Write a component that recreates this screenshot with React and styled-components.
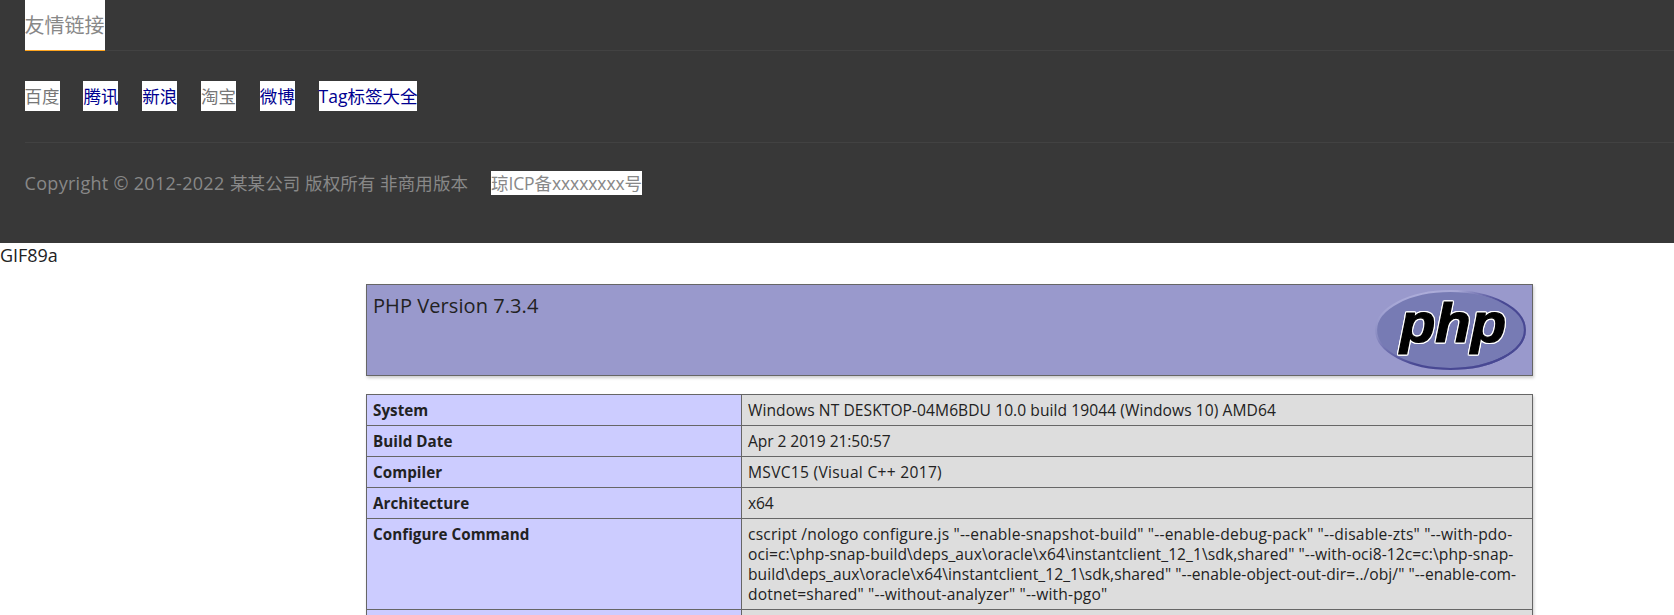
import React from "react";
import styled, { createGlobalStyle } from "styled-components";

const GlobalStyle = createGlobalStyle`
  * { box-sizing: border-box; }
  html, body { margin: 0; }
  body {
    background: #fff;
    color: #222;
    font-family: "Open Sans", "Noto Sans CJK SC", sans-serif;
  }
`;

const Page = styled.div`
  height: 615px;
  overflow: hidden;
`;

const Footer = styled.footer`
  height: 243px;
  padding-left: 24.6px;
  background: #383838;
  color: #888;
`;

const FooterHeading = styled.div`
  display: flex;
  height: 51px;
  border-bottom: 1px solid #424242;
`;

const HeadingLabel = styled.span`
  width: 80px;
  height: 51px;
  background: #fff;
  border-bottom: 1px solid #ffa51f;
  font-size: 20px;
  line-height: 51px;
  white-space: nowrap;
`;

const LinkRow = styled.nav`
  display: flex;
  gap: 23.8px;
  height: 92px;
  padding-top: 30px;
  border-bottom: 1px solid #424242;
`;

const FriendLink = styled.a`
  height: 30px;
  background: #fff;
  color: ${(p) => (p.$plain ? "#777" : "#000090")};
  font-size: 17.5px;
  line-height: 31px;
  white-space: nowrap;
`;

const Copyright = styled.div`
  display: flex;
  align-items: flex-start;
  padding-top: 28px;
  font-size: 17.5px;
  line-height: 25px;
  white-space: pre;
`;

const CopyrightYears = styled.span`
  width: 205.4px;
  font-size: 18px;
  letter-spacing: 0.29px;
`;

const CopyrightOwner = styled.span`
  width: 238px;
  letter-spacing: 0.1px;
`;

const IcpLink = styled.a`
  width: 151px;
  height: 24px;
  margin-left: 23px;
  background: #fff;
  letter-spacing: -0.09px;
`;

const Signature = styled.div`
  height: 41px;
  font-size: 18px;
  line-height: 25px;
  letter-spacing: -0.05px;
`;

const InfoColumn = styled.main`
  width: 1167px;
  margin-left: 366px;
`;

const VersionBox = styled.header`
  display: flex;
  justify-content: space-between;
  height: 92px;
  margin-bottom: 18px;
  padding: 5px 6px;
  background: #9999cc;
  border: 1px solid #666;
  box-shadow: 1px 2px 3px #ccc;
`;

const VersionTitle = styled.h1`
  margin: 0;
  font-size: 20px;
  font-weight: 400;
  line-height: 32px;
  letter-spacing: 0.07px;
`;

const Logo = styled.svg`
  display: block;
  width: 151px;
  height: 80px;
`;

const LogoText = styled.text`
  font-family: "Liberation Sans", sans-serif;
  font-size: 55px;
  font-weight: 700;
  font-style: italic;
  fill: #000;
  stroke: #000;
  stroke-width: 1.2px;
  filter: drop-shadow(1px 0 0.4px #fff) drop-shadow(-1px 0 0.4px #fff)
    drop-shadow(0 1px 0.4px #fff) drop-shadow(0 -1px 0.4px #fff);
`;

const InfoTable = styled.section`
  border: 1px solid #666;
  box-shadow: 1px 2px 3px #ccc;
`;

const InfoRow = styled.div`
  display: grid;
  grid-template-columns: 375px 1fr;
  min-height: 31px;
  border-bottom: 1px solid #666;
  line-height: 20px;
`;

const Name = styled.div`
  padding: 5px 6px;
  background: #ccccff;
  border-right: 1px solid #666;
  font-size: 15.2px;
  font-weight: 700;
  letter-spacing: 0.05px;
`;

const Value = styled.div`
  padding: 5px 6px;
  background: #ddd;
  font-size: 15.6px;
`;

const Line = styled.div`
  white-space: nowrap;
  letter-spacing: ${(p) => p.$track}px;
`;

const links = [
  { label: "百度", plain: true },
  { label: "腾讯" },
  { label: "新浪" },
  { label: "淘宝", plain: true },
  { label: "微博" },
  { label: "Tag标签大全" },
];

const rows = [
  ["System", [["Windows NT DESKTOP-04M6BDU 10.0 build 19044 (Windows 10) AMD64", 0.06]]],
  ["Build Date", [["Apr 2 2019 21:50:57", -0.08]]],
  ["Compiler", [["MSVC15 (Visual C++ 2017)", 0.29]]],
  ["Architecture", [["x64", -0.2]]],
  [
    "Configure Command",
    [
      ['cscript /nologo configure.js "--enable-snapshot-build" "--enable-debug-pack" "--disable-zts" "--with-pdo-', 0.19],
      ['oci=c:\\php-snap-build\\deps_aux\\oracle\\x64\\instantclient_12_1\\sdk,shared" "--with-oci8-12c=c:\\php-snap-', 0.08],
      ['build\\deps_aux\\oracle\\x64\\instantclient_12_1\\sdk,shared" "--enable-object-out-dir=../obj/" "--enable-com-', 0.06],
      ['dotnet=shared" "--without-analyzer" "--with-pgo"', 0.15],
    ],
  ],
  ["", []],
];

function PhpLogo() {
  return (
    <Logo viewBox="0 0 151 80" role="img" aria-label="PHP logo">
      <defs>
        <linearGradient id="rim" x1="0.25" y1="0" x2="0.6" y2="1">
          <stop offset="0" stopColor="#b0b0dc" />
          <stop offset="0.45" stopColor="#8a8cc2" />
          <stop offset="0.85" stopColor="#484893" />
        </linearGradient>
        <linearGradient id="rimRight" x1="0" y1="0" x2="1" y2="0">
          <stop offset="0.55" stopColor="#484893" stopOpacity="0" />
          <stop offset="0.85" stopColor="#484893" />
        </linearGradient>
      </defs>
      <ellipse cx="75.5" cy="40" rx="74.4" ry="38.9" fill="#777bb4" stroke="url(#rim)" strokeWidth="2" />
      <ellipse cx="75.5" cy="40" rx="74.4" ry="38.9" fill="none" stroke="url(#rimRight)" strokeWidth="2" />
      <LogoText x="25" y="52" textLength="106" lengthAdjust="spacingAndGlyphs">
        php
      </LogoText>
    </Logo>
  );
}

export default function App() {
  return (
    <Page>
      <GlobalStyle />
      <Footer>
        <FooterHeading>
          <HeadingLabel>友情链接</HeadingLabel>
        </FooterHeading>
        <LinkRow>
          {links.map((link) => (
            <FriendLink key={link.label} $plain={link.plain}>
              {link.label}
            </FriendLink>
          ))}
        </LinkRow>
        <Copyright>
          <CopyrightYears>Copyright © 2012-2022 </CopyrightYears>
          <CopyrightOwner>某某公司 版权所有 非商用版本</CopyrightOwner>
          <IcpLink>琼ICP备xxxxxxxx号</IcpLink>
        </Copyright>
      </Footer>
      <Signature>GIF89a</Signature>
      <InfoColumn>
        <VersionBox>
          <VersionTitle>PHP Version 7.3.4</VersionTitle>
          <PhpLogo />
        </VersionBox>
        <InfoTable>
          {rows.map(([name, lines]) => (
            <InfoRow key={name}>
              <Name>{name}</Name>
              <Value>
                {lines.map(([text, track]) => (
                  <Line key={text} $track={track}>
                    {text}
                  </Line>
                ))}
              </Value>
            </InfoRow>
          ))}
        </InfoTable>
      </InfoColumn>
    </Page>
  );
}
